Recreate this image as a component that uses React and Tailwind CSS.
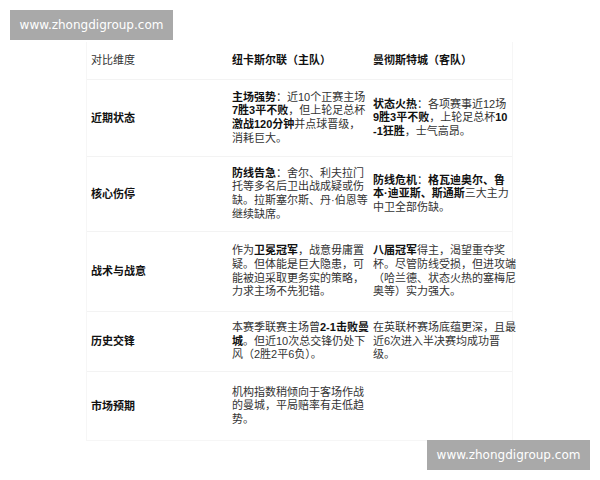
import React from 'react'

const font = { fontFamily: '"Liberation Sans", "Noto Sans CJK SC", sans-serif' }

// each cell is a list of lines; each line a list of [text, bold]
const rows = [
  {
    label: '近期状态',
    h: 'h-[77px]',
    home: [
      [['主场强势', 1], ['：近10个正赛主场']],
      [['7胜3平不败', 1], ['，但上轮足总杯']],
      [['激战120分钟', 1], ['并点球晋级，']],
      [['消耗巨大。']],
    ],
    away: [
      [['状态火热', 1], ['：各项赛事近12场']],
      [['9胜3平不败', 1], ['，上轮足总杯'], ['10', 1]],
      [['-1狂胜', 1], ['，士气高昂。']],
    ],
  },
  {
    label: '核心伤停',
    h: 'h-[75px]',
    home: [
      [['防线告急', 1], ['：舍尔、利夫拉门']],
      [['托等多名后卫出战成疑或伤']],
      [['缺。拉斯塞尔斯、丹·伯恩等']],
      [['继续缺席。']],
    ],
    away: [
      [['防线危机', 1], ['：'], ['格瓦迪奥尔、鲁', 1]],
      [['本·迪亚斯、斯通斯', 1], ['三大主力']],
      [['中卫全部伤缺。']],
    ],
  },
  {
    label: '战术与战意',
    h: 'h-[80px]',
    home: [
      [['作为'], ['卫冕冠军', 1], ['，战意毋庸置']],
      [['疑。但体能是巨大隐患，可']],
      [['能被迫采取更务实的策略，']],
      [['力求主场不先犯错。']],
    ],
    away: [
      [['八届冠军', 1], ['得主，渴望重夺奖']],
      [['杯。尽管防线受损，但进攻端']],
      [['（哈兰德、状态火热的塞梅尼']],
      [['奥等）实力强大。']],
    ],
  },
  {
    label: '历史交锋',
    h: 'h-[60px]',
    home: [
      [['本赛季联赛主场曾'], ['2-1击败曼', 1]],
      [['城', 1], ['。但近10次总交锋仍处下']],
      [['风（2胜2平6负）。']],
    ],
    away: [
      [['在英联杯赛场底蕴更深，且最']],
      [['近6次进入半决赛均成功晋']],
      [['级。']],
    ],
  },
  {
    label: '市场预期',
    h: 'h-[68px]',
    home: [
      [['机构指数稍倾向于客场作战']],
      [['的曼城，平局赔率有走低趋']],
      [['势。']],
    ],
    away: [],
  },
]

function Cell({ lines }) {
  return (
    <div className="flex flex-col justify-center pl-[5px] text-[11px] leading-[13.6px] text-[#333]">
      {lines.map((line, i) => (
        <div key={i} className="whitespace-nowrap">
          {line.map(([t, b], j) => (
            <span key={j} className={b ? 'font-bold text-[#111]' : ''}>{t}</span>
          ))}
        </div>
      ))}
    </div>
  )
}

function Watermark({ className }) {
  return (
    <div
      className={`absolute w-[163px] h-[30px] bg-[#a9a9a9] text-white text-[12px] flex items-center justify-center ${className}`}
      style={{ fontFamily: '"DejaVu Sans", sans-serif' }}
    >
      www.zhongdigroup.com
    </div>
  )
}

export default function App() {
  return (
    <div className="relative w-[600px] h-[480px] bg-white overflow-hidden" style={font}>
      <Watermark className="left-[10px] top-[10px]" />

      <div className="ml-[86px] mt-[42px] w-[427px] border border-[#f6f6f6] border-t-0">
        <div className="grid grid-cols-[140px_141px_146px] h-[38px] items-center border-b border-[#f3f3f3] text-[11px]">
          <div className="pl-[4px] text-[#333]">对比维度</div>
          <div className="pl-[5px] font-bold text-[#111]">纽卡斯尔联（主队）</div>
          <div className="pl-[5px] font-bold text-[#111]">曼彻斯特城（客队）</div>
        </div>
        {rows.map((r, i) => (
          <div
            key={r.label}
            className={`grid grid-cols-[140px_141px_146px] ${r.h} ${i < rows.length - 1 ? 'border-b border-[#f3f3f3]' : ''}`}
          >
            <div className="flex items-center pl-[4px] text-[11px] font-bold text-[#111]">{r.label}</div>
            <Cell lines={r.home} />
            <Cell lines={r.away} />
          </div>
        ))}
      </div>

      <Watermark className="left-[427px] top-[440px]" />
    </div>
  )
}
